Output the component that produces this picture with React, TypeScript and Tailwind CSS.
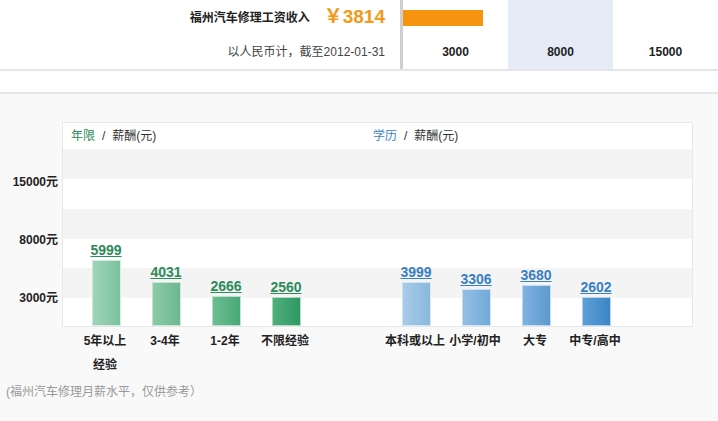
const font = { fontFamily: '"Liberation Sans", "Noto Sans CJK SC", sans-serif' };

const green = [
  { v: 5999, h: 66, label: ["5年以上", "经验"], c: "from-[#9fd4b8] to-[#7cc29e]" },
  { v: 4031, h: 44, label: ["3-4年"], c: "from-[#8ccaa8] to-[#6cb790]" },
  { v: 2666, h: 30, label: ["1-2年"], c: "from-[#6cbd92] to-[#4aa878]" },
  { v: 2560, h: 29, label: ["不限经验"], c: "from-[#4fae7c] to-[#2e9862]" },
];
const blue = [
  { v: 3999, h: 44, label: ["本科或以上"], c: "from-[#a8cbe8] to-[#8ab8de]" },
  { v: 3306, h: 37, label: ["小学/初中"], c: "from-[#94bfe4] to-[#72a8d8]" },
  { v: 3680, h: 41, label: ["大专"], c: "from-[#7fb2e0] to-[#5c9ad0]" },
  { v: 2602, h: 29, label: ["中专/高中"], c: "from-[#5e9fd6] to-[#3a85c6]" },
];

function Bar({ d, blueTone }: { d: (typeof green)[0]; blueTone?: boolean }) {
  return (
    <div className="w-[60px] flex flex-col items-center justify-end">
      <span
        className={`text-[14px] font-bold underline leading-none mb-[3px] ${blueTone ? "text-[#3a7fc0]" : "text-[#2d8a5a]"}`}
      >
        {d.v}
      </span>
      <div
        className={`w-[29px] bg-gradient-to-r ${d.c} border border-white/60`}
        style={{ height: d.h }}
      />
    </div>
  );
}

function Label({ d }: { d: (typeof green)[0] }) {
  return (
    <div className="w-[60px] flex flex-col items-center text-[12px] font-bold text-[#222] leading-[24px] whitespace-nowrap">
      {d.label.map((l) => (
        <span key={l}>{l}</span>
      ))}
    </div>
  );
}

export default function App() {
  return (
    <div className="w-[718px] h-[421px] bg-white overflow-hidden" style={font}>
      {/* Top summary */}
      <div className="flex h-[71px] border-b-2 border-[#e4e6ea]">
        <div className="w-[400px] flex flex-col items-end pr-[15px] text-[12px]">
          <div className="flex items-center h-[35px] gap-[14px]">
            <span className="font-bold text-[#222]">福州汽车修理工资收入</span>
            <span className="text-[#f29a1a] font-bold text-[19px]">￥3814</span>
          </div>
          <div className="h-[34px] flex items-center text-[#444]">以人民币计，截至2012-01-31</div>
        </div>
        <div className="w-[3px] bg-[#cfcfcf]" />
        <div className="flex-1 grid grid-cols-3 text-[12px] font-bold text-[#222]">
          <div className="flex flex-col">
            <div className="h-[35px] flex items-center">
              <div className="w-[80px] h-[16px] bg-[#f7940f]" />
            </div>
            <div className="flex-1 flex items-center justify-center">3000</div>
          </div>
          <div className="bg-[#e6ecf7] flex flex-col">
            <div className="h-[35px]" />
            <div className="flex-1 flex items-center justify-center">8000</div>
          </div>
          <div className="flex flex-col">
            <div className="h-[35px]" />
            <div className="flex-1 flex items-center justify-center">15000</div>
          </div>
        </div>
      </div>

      {/* Bottom chart panel */}
      <div className="mt-[21px] h-[330px] bg-[#f9f9f9] border-t-2 border-[#e4e6ea] pt-[28px]">
        <div className="flex">
          <div className="w-[62px] relative text-[12px] font-bold text-[#222]">
            <span className="absolute right-[4px] top-[51px]">15000元</span>
            <span className="absolute right-[4px] top-[109px]">8000元</span>
            <span className="absolute right-[4px] top-[167px]">3000元</span>
          </div>
          <div className="w-[631px] h-[205px] bg-white border border-[#e8e8e8] relative">
            <div className="absolute inset-0 flex flex-col">
              <div className="h-[26px]" />
              <div className="h-[30px] bg-[#f4f4f4]" />
              <div className="h-[30px]" />
              <div className="h-[30px] bg-[#f4f4f4]" />
              <div className="h-[29px]" />
              <div className="h-[30px] bg-[#f4f4f4]" />
            </div>
            <div className="relative h-full flex flex-col">
              <div className="h-[26px] flex items-center text-[12px] text-[#333]">
                <span className="w-[310px] pl-[8px]">
                  <span className="text-[#2d8a5a]">年限</span>
                  <span className="mx-[7px]">/</span>薪酬(元)
                </span>
                <span>
                  <span className="text-[#3a7fc0]">学历</span>
                  <span className="mx-[7px]">/</span>薪酬(元)
                </span>
              </div>
              <div className="flex-1 flex items-end pl-[13px]">
                {green.map((d) => (
                  <Bar key={d.v} d={d} />
                ))}
                <div className="w-[70px]" />
                {blue.map((d) => (
                  <Bar key={d.v} d={d} blueTone />
                ))}
              </div>
            </div>
          </div>
        </div>
        <div className="flex pl-[75px] pt-[2px]">
          {green.map((d) => (
            <Label key={d.v} d={d} />
          ))}
          <div className="w-[70px]" />
          {blue.map((d) => (
            <Label key={d.v} d={d} />
          ))}
        </div>
        <div className="pl-[6px] mt-[6px] text-[12px] text-[#999]">(福州汽车修理月薪水平，仅供参考）</div>
      </div>
    </div>
  );
}
